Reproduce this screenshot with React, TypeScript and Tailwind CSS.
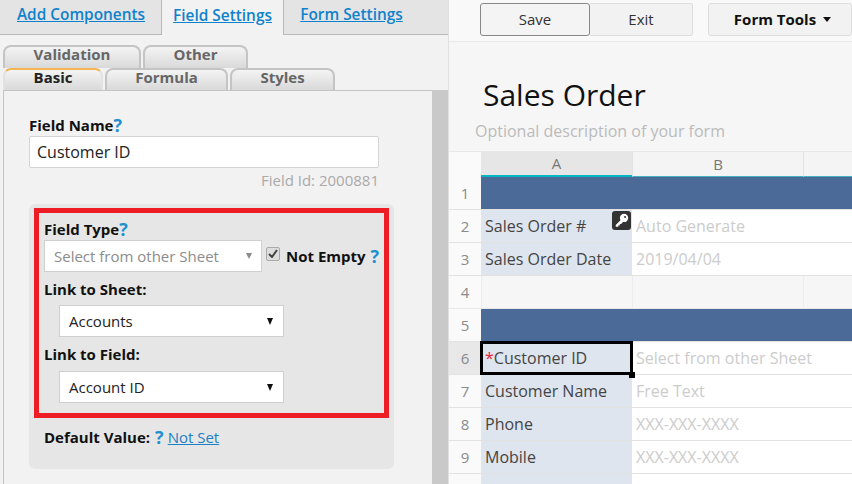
import { ReactNode } from 'react';

const font = { fontFamily: '"Open Sans", sans-serif' };

function Help({ className = '' }: { className?: string }) {
  return <span className={`text-[18px] font-bold leading-none text-[#1e8fd0] ${className}`}>?</span>;
}

function SubTab({ label, width, pad, active = false }: { label: string; width: string; pad: string; active?: boolean }) {
  return (
    <div
      className={`${width} ${pad} flex h-full items-center justify-center rounded-t-[8px] border-x-2 border-t-2 bg-gradient-to-b from-[#f4f4f4] to-[#d9d9d9] text-[15px] font-bold leading-none ${
        active ? 'border-t-[#f5b553] border-x-[#e2e2e2] text-[#222]' : 'border-[#c4c4c4] text-[#666]'
      }`}
    >
      {label}
    </div>
  );
}

function SelectBox({ label }: { label: string }) {
  return (
    <div className="ml-[15px] flex h-[32px] w-[225px] items-center justify-between border border-[#cfcfcf] bg-white pl-[9px] pr-[10px] text-[15px] text-[#222]">
      <span>{label}</span>
      <span className="h-0 w-0 border-x-[3.5px] border-t-[7px] border-x-transparent border-t-[#111]" />
    </div>
  );
}

function LeftPane() {
  return (
    <div className="flex h-[484px] w-[449px] shrink-0 flex-col border-r border-[#e0e0e0] bg-[#f2f2f2]">
      <div className="flex h-[35px] shrink-0 border-b border-[#b9b9b9] bg-[#e4e4e4] text-[15.4px] font-semibold text-[#0f82cc]">
        <div className="flex w-[161px] justify-center pl-[1px] pt-[3px]">
          <span className="underline">Add Components</span>
        </div>
        <div className="-mb-px flex h-[35px] w-[123px] justify-center border-x border-[#b9b9b9] bg-[#f2f2f2] pt-[4px]">
          <span className="underline">Field Settings</span>
        </div>
        <div className="flex w-[135px] justify-center pt-[3px]">
          <span className="underline">Form Settings</span>
        </div>
      </div>

      <div className="flex min-h-0 flex-1 flex-col pl-[3px] pt-[10px]">
        <div className="flex h-[23px] shrink-0 gap-[2px]">
          <SubTab label="Validation" width="w-[138px]" pad="pb-[6px]" />
          <SubTab label="Other" width="w-[105px]" pad="pb-[6px]" />
        </div>
        <div className="flex h-[22px] shrink-0 gap-[2px]">
          <SubTab label="Basic" width="w-[100px]" pad="pb-[5px]" active />
          <SubTab label="Formula" width="w-[123px]" pad="pb-[5px]" />
          <SubTab label="Styles" width="w-[105px]" pad="pb-[5px]" />
        </div>

        <div className="flex min-h-0 flex-1">
          <div className="w-[429px] border-l border-t border-[#c4c4c4] pl-[25px] pt-[24px]">
            <div className="flex h-[20px] items-center text-[15px] font-bold text-[#111]">
              Field Name<Help />
            </div>
            <div className="mt-[1px] flex h-[32px] w-[350px] items-center rounded-[2px] border border-[#d4d4d4] bg-white pl-[7px] text-[16px] text-[#222]">
              Customer ID
            </div>
            <div className="mt-[3px] w-[350px] text-right text-[15px] leading-[18px] text-[#aaa]">Field Id: 2000881</div>

            <div className="mt-[15px] h-[265px] w-[365px] rounded-[6px] bg-[#e6e6e6] pl-[5px] pt-[4px]">
              <div className="h-[210px] w-[355px] border-[5px] border-[#ee1c25] pl-[5px] pt-[6px]">
                <div className="flex h-[20px] items-center text-[15px] font-bold text-[#111]">
                  Field Type<Help />
                </div>
                <div className="mt-[1px] flex items-center">
                  <div className="flex h-[32px] w-[218px] items-center justify-between border border-[#cfcfcf] bg-white pl-[9px] pr-[9px] text-[15px] text-[#8c8c8c]">
                    <span>Select from other Sheet</span>
                    <span className="h-0 w-0 border-x-[3.5px] border-t-[6px] border-x-transparent border-t-[#8c8c8c]" />
                  </div>
                  <div className="-mt-[5px] ml-[4px] flex h-[14px] w-[14px] items-center justify-center rounded-[2px] border border-[#aaa] bg-[#ddd]">
                    <svg width="10" height="9" viewBox="0 0 10 9">
                      <path d="M1 5l3 3 5-7" fill="none" stroke="#444" strokeWidth="2" />
                    </svg>
                  </div>
                  <span className="ml-[6px] text-[15px] font-bold text-[#111]">Not Empty</span>
                  <Help className="ml-[5px]" />
                </div>
                <div className="mt-[7px] flex h-[20px] items-center text-[15px] font-bold text-[#111]">Link to Sheet:</div>
                <div className="mt-[6px]"><SelectBox label="Accounts" /></div>
                <div className="mt-[7px] flex h-[20px] items-center text-[15px] font-bold text-[#111]">Link to Field:</div>
                <div className="mt-[7px]"><SelectBox label="Account ID" /></div>
              </div>
              <div className="mt-[9px] flex h-[20px] items-center pl-[10px] text-[15px] text-[#111]">
                <span className="font-bold">Default Value:</span>
                <Help className="ml-[5px]" />
                <span className="ml-[4px] text-[#1e80c4] underline">Not Set</span>
              </div>
            </div>
          </div>
          <div className="w-[16px] bg-[#c9c9c9]" />
        </div>
      </div>
    </div>
  );
}

function RowNum({ n, active = false }: { n?: number; active?: boolean }) {
  return (
    <div className={`flex w-[32px] shrink-0 items-center justify-center text-[15px] text-[#8a8a8a] ${active ? 'bg-[#e8e8e8]' : 'bg-[#fafafa]'}`}>
      {n}
    </div>
  );
}

function Row({ n, a, b, active = false, children }: { n?: number; a?: ReactNode; b?: string; active?: boolean; children?: ReactNode }) {
  return (
    <div className="flex h-[33px] shrink-0 border-b border-[#e2e2e2] bg-white">
      <RowNum n={n} active={active} />
      <div className="relative flex w-[151px] shrink-0 items-center bg-[#dfe5ee] pl-[4px] text-[16px] text-[#444]">
        {a}
        {children}
      </div>
      <div className="flex flex-1 items-center pl-[4px] text-[16px] text-[#cccccc]">{b}</div>
    </div>
  );
}

function BandRow({ n }: { n: number }) {
  return (
    <div className="flex h-[33px] shrink-0 border-b border-[#e2e2e2]">
      <RowNum n={n} />
      <div className="flex-1 bg-[#4b6a98]" />
    </div>
  );
}

function RightPane() {
  return (
    <div className="flex h-[484px] min-w-0 flex-1 flex-col overflow-hidden bg-[#f6f6f6]">
      <div className="flex h-[42px] shrink-0 items-start border-b border-[#e8e8e8] bg-[#f9f9f9] pl-[31px] pt-[3px] text-[15px] text-[#333]">
        <div className="flex h-[33px] w-[110px] items-center justify-center rounded-[3px] border border-[#888] bg-[#f4f4f4]">Save</div>
        <div className="flex h-[33px] w-[103px] items-center justify-center rounded-r-[3px] border border-l-0 border-[#ddd] bg-[#f2f2f2]">Exit</div>
        <div className="ml-[15px] flex h-[33px] w-[144px] shrink-0 items-center justify-center gap-[7px] rounded-[3px] border border-[#ddd] bg-[#f2f2f2] pl-[5px] font-bold text-[#111]">
          Form Tools
          <span className="h-0 w-0 border-x-[4.5px] border-t-[5px] border-x-transparent border-t-[#111]" />
        </div>
      </div>

      <div className="h-[110px] shrink-0 border-b border-[#e8e8e8]">
        <div className="pl-[34px] pt-[31px] text-[30px] leading-[44px] text-[#111]">Sales Order</div>
        <div className="pl-[26px] pt-[2px] text-[16px] leading-[24px] text-[#bbb]">Optional description of your form</div>
      </div>

      <div className="flex h-[25px] shrink-0 bg-[#fafafa] text-[15px] text-[#777]">
        <div className="w-[32px] shrink-0" />
        <div className="flex w-[151px] shrink-0 items-center justify-center border-b-2 border-[#00b5c4] bg-[#e6e6e6]">A</div>
        <div className="flex w-[171px] shrink-0 items-center justify-center border-b border-l border-b-[#3fb3c0] border-l-[#e2e2e2] bg-[#f4f4f4]">B</div>
        <div className="flex-1 border-b border-l border-b-[#3fb3c0] border-l-[#e2e2e2] bg-[#f4f4f4]" />
      </div>

      <BandRow n={1} />
      <Row n={2} a="Sales Order #" b="Auto Generate">
        <span className="absolute right-[1px] top-[1px] flex h-[19px] w-[19px] items-center justify-center rounded-[3px] bg-[#333]">
          <svg width="15" height="15" viewBox="0 0 13 13">
            <circle cx="8.7" cy="4.3" r="3.6" fill="#fff" />
            <circle cx="9.6" cy="3.4" r="0.9" fill="#333" />
            <path d="M6.5 5.5L1.5 10.5v1.5h2.2V10.8h1.3V9.5h1.2L8 7.5z" fill="#fff" />
          </svg>
        </span>
      </Row>
      <Row n={3} a="Sales Order Date" b="2019/04/04" />
      <div className="flex h-[33px] shrink-0 border-b border-[#e8e8e8]">
        <RowNum n={4} />
        <div className="w-[151px] shrink-0 border-l border-[#ececec]" />
        <div className="w-[171px] shrink-0 border-l border-[#ececec]" />
        <div className="flex-1 border-l border-[#ececec]" />
      </div>
      <BandRow n={5} />
      <Row
        n={6}
        active
        a={
          <>
            <span className="text-[#ee2233]">*</span>Customer ID
          </>
        }
        b="Select from other Sheet"
      >
        <span className="pointer-events-none absolute inset-[-1px] border-[3px] border-black" />
        <span className="absolute bottom-[-4px] right-[-3px] z-10 h-[6px] w-[6px] bg-black" />
      </Row>
      <Row n={7} a="Customer Name" b="Free Text" />
      <Row n={8} a="Phone" b="XXX-XXX-XXXX" />
      <Row n={9} a="Mobile" b="XXX-XXX-XXXX" />
      <Row />
    </div>
  );
}

export default function App() {
  return (
    <div className="flex h-[484px] w-[852px] overflow-hidden" style={font}>
      <LeftPane />
      <RightPane />
    </div>
  );
}
